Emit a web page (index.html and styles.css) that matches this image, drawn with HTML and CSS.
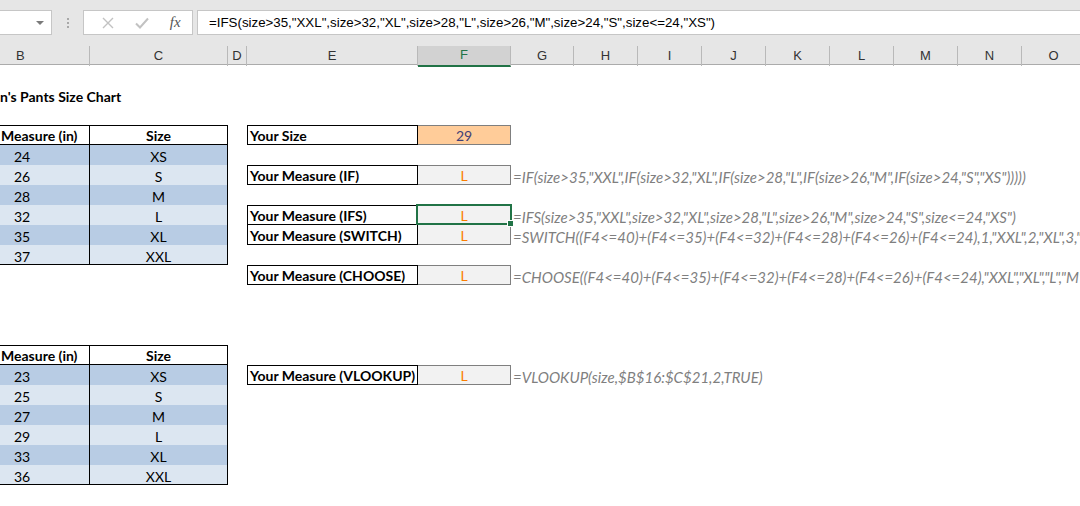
FILE: index.html
```html
<!DOCTYPE html>
<html>
<head>
<meta charset="utf-8">
<link rel="stylesheet" href="styles.css">
</head>
<body>
<div class="app">
  <div class="toolbar">
    <div class="namebox"><span class="caret"></span></div>
    <div class="grip"><i></i><i></i><i></i></div>
    <div class="fbuttons">
      <span class="btn"><svg width="12" height="12" viewBox="0 0 12 12"><path d="M1 1L11 11M11 1L1 11" stroke="#c2c2c2" stroke-width="1.4" fill="none"/></svg></span>
      <span class="btn"><svg width="14" height="12" viewBox="0 0 14 12"><path d="M1 6.5L5 10.5L13 1.5" stroke="#c2c2c2" stroke-width="2" fill="none"/></svg></span>
      <span class="btn fx">fx</span>
    </div>
    <div class="formula">=IFS(size&gt;35,"XXL",size&gt;32,"XL",size&gt;28,"L",size&gt;26,"M",size&gt;24,"S",size&lt;=24,"XS")</div>
  </div>

  <div class="colheads">
    <div class="ch chb">B</div>
    <div class="ch">C</div>
    <div class="ch">D</div>
    <div class="ch">E</div>
    <div class="ch sel">F</div>
    <div class="ch">G</div>
    <div class="ch">H</div>
    <div class="ch">I</div>
    <div class="ch">J</div>
    <div class="ch">K</div>
    <div class="ch">L</div>
    <div class="ch">M</div>
    <div class="ch">N</div>
    <div class="ch">O</div>
  </div>

  <div class="sheet">
    <div class="row"></div>
    <div class="row"><div class="title">n's Pants Size Chart</div></div>
    <div class="row"></div>
    <div class="row">
      <div class="tb th thb">Measure (in)</div><div class="tc th">Size</div><div></div>
      <div class="lbl">Your Size</div><div class="inp">29</div><div></div>
    </div>
    <div class="row">
      <div class="tb dk">24</div><div class="tc dk">XS</div><div></div><div></div><div></div><div></div>
    </div>
    <div class="row">
      <div class="tb lt">26</div><div class="tc lt">S</div><div></div>
      <div class="lbl">Your Measure (IF)</div><div class="calc">L</div>
      <div class="expl">=IF(size&gt;35,"XXL",IF(size&gt;32,"XL",IF(size&gt;28,"L",IF(size&gt;26,"M",IF(size&gt;24,"S","XS")))))</div>
    </div>
    <div class="row">
      <div class="tb dk">28</div><div class="tc dk">M</div><div></div><div></div><div></div><div></div>
    </div>
    <div class="row">
      <div class="tb lt">32</div><div class="tc lt">L</div><div></div>
      <div class="lbl">Your Measure (IFS)</div><div class="calc active">L</div>
      <div class="expl">=IFS(size&gt;35,"XXL",size&gt;32,"XL",size&gt;28,"L",size&gt;26,"M",size&gt;24,"S",size&lt;=24,"XS")</div>
    </div>
    <div class="row">
      <div class="tb dk">35</div><div class="tc dk">XL</div><div></div>
      <div class="lbl nt">Your Measure (SWITCH)</div><div class="calc nt">L</div>
      <div class="expl">=SWITCH((F4&lt;=40)+(F4&lt;=35)+(F4&lt;=32)+(F4&lt;=28)+(F4&lt;=26)+(F4&lt;=24),1,"XXL",2,"XL",3,"L",4,"M",5,"S",6,"XS")</div>
    </div>
    <div class="row">
      <div class="tb lt last">37</div><div class="tc lt last">XXL</div><div></div><div></div><div></div><div></div>
    </div>
    <div class="row">
      <div></div><div></div><div></div>
      <div class="lbl">Your Measure (CHOOSE)</div><div class="calc">L</div>
      <div class="expl">=CHOOSE((F4&lt;=40)+(F4&lt;=35)+(F4&lt;=32)+(F4&lt;=28)+(F4&lt;=26)+(F4&lt;=24),"XXL","XL","L","M","S","XS")</div>
    </div>
    <div class="row"></div>
    <div class="row"></div>
    <div class="row"></div>
    <div class="row">
      <div class="tb th thb">Measure (in)</div><div class="tc th">Size</div><div></div><div></div><div></div><div></div>
    </div>
    <div class="row">
      <div class="tb dk">23</div><div class="tc dk">XS</div><div></div>
      <div class="lbl">Your Measure (VLOOKUP)</div><div class="calc">L</div>
      <div class="expl">=VLOOKUP(size,$B$16:$C$21,2,TRUE)</div>
    </div>
    <div class="row"><div class="tb lt">25</div><div class="tc lt">S</div></div>
    <div class="row"><div class="tb dk">27</div><div class="tc dk">M</div></div>
    <div class="row"><div class="tb lt">29</div><div class="tc lt">L</div></div>
    <div class="row"><div class="tb dk">33</div><div class="tc dk">XL</div></div>
    <div class="row"><div class="tb lt last">36</div><div class="tc lt last">XXL</div></div>
    <div class="row"></div>
  </div>
</div>
</body>
</html>
```

FILE: styles.css
```css
html, body {
  margin: 0;
  padding: 0;
  background: #ffffff;
}
body {
  width: 1080px;
  height: 506px;
  overflow: hidden;
  font-family: "Lato", "Liberation Sans", sans-serif;
}
.app {
  width: 1080px;
  height: 506px;
  overflow: hidden;
}

/* ---------- formula bar ---------- */
.toolbar {
  height: 45px;
  background: #e6e6e6;
  display: flex;
  align-items: flex-start;
  padding-top: 10px;
  box-sizing: border-box;
}
.namebox {
  width: 52px;
  height: 25px;
  box-sizing: border-box;
  background: #ffffff;
  border: 1px solid #c6c6c6;
  border-left: none;
  display: flex;
  justify-content: flex-end;
  align-items: center;
  padding-right: 7px;
}
.caret {
  width: 0;
  height: 0;
  border-left: 4px solid transparent;
  border-right: 4px solid transparent;
  border-top: 4px solid #7a7a7a;
}
.grip {
  width: 31px;
  height: 25px;
  display: flex;
  flex-direction: column;
  align-items: center;
  justify-content: center;
  gap: 2px;
}
.grip i {
  display: block;
  width: 2px;
  height: 2px;
  background: #a8a8a8;
}
.fbuttons {
  width: 110px;
  height: 25px;
  box-sizing: border-box;
  background: #ffffff;
  border: 1px solid #c6c6c6;
  display: flex;
  align-items: center;
  padding: 0 0 0 7px;
}
.btn {
  width: 35px;
  display: flex;
  justify-content: center;
  align-items: center;
}
.fx {
  font-family: "Liberation Serif", serif;
  font-style: italic;
  font-size: 15px;
  color: #555555;
}
.formula {
  flex: 1;
  margin-left: 4px;
  height: 25px;
  box-sizing: border-box;
  background: #ffffff;
  border: 1px solid #c6c6c6;
  border-right: none;
  font-family: "Liberation Sans", sans-serif;
  font-size: 13.3px;
  line-height: 24px;
  padding-left: 11px;
  color: #000000;
  white-space: nowrap;
  overflow: hidden;
}

/* ---------- column headers ---------- */
.colheads {
  height: 20px;
  background: #e6e6e6;
  display: grid;
  grid-template-columns: 90px 138px 19px 171px 93px 63px repeat(8, 64px);
  border-bottom: 1px solid #ababab;
  box-sizing: border-box;
}
.ch {
  font-family: "Liberation Sans", sans-serif;
  font-size: 13px;
  color: #333333;
  text-align: center;
  line-height: 20px;
  border-right: 1px solid #b9b9b9;
  margin-top: 1px;
  box-sizing: border-box;
}
.chb {
  text-align: left;
  padding-left: 16px;
}
.ch.sel {
  background: #d2d2d2;
  color: #217346;
  border-bottom: 2px solid #217346;
  margin-bottom: -1px;
  line-height: 18px;
}

/* ---------- sheet ---------- */
.sheet {
  font-size: 14px;
  color: #000000;
}
.row {
  height: 20px;
  display: grid;
  grid-template-columns: 90px 138px 19px 171px 93px 1fr;
  grid-template-rows: 20px;
  line-height: 20px;
}
.row > div {
  box-sizing: border-box;
  white-space: nowrap;
  padding-top: 2px;
}
.title {
  grid-column: 1 / 4;
  font-weight: bold;
}

.tb {
  padding-left: 14px;
  border-right: 1px solid #000000;
}
.tc {
  text-align: center;
  border-right: 1px solid #000000;
}
.row > .th {
  background: #ffffff;
  font-weight: bold;
  border-top: 1px solid #000000;
  border-bottom: 1px solid #000000;
  line-height: 18px;
  padding-top: 1px;
}
.thb {
  padding-left: 1px;
}
.dk { background: #b8cce4; }
.lt { background: #dce6f1; }
.last { border-bottom: 1px solid #000000; }

.row > .lbl {
  border: 1px solid #000000;
  font-weight: bold;
  padding-left: 2px;
  line-height: 18px;
  padding-top: 1px;
}
.row > .inp {
  background: #ffcc99;
  color: #3f3f76;
  border: 1px solid #7f7f7f;
  border-left: none;
  text-align: center;
  line-height: 18px;
  padding-top: 1px;
}
.row > .calc {
  background: #f2f2f2;
  color: #fa7d00;
  border: 1px solid #7f7f7f;
  border-left: none;
  text-align: center;
  line-height: 18px;
  padding-top: 1px;
}
.row > .nt {
  border-top: none;
  line-height: 19px;
}
.expl {
  color: #7f7f7f;
  font-style: italic;
  font-size: 15px;
  padding-left: 2px;
  overflow: visible;
}
.active {
  position: relative;
}
.active::after {
  content: "";
  position: absolute;
  left: -2px;
  top: -2px;
  right: -2px;
  bottom: -1px;
  border: 2px solid #217346;
}
.active::before {
  content: "";
  position: absolute;
  right: -4px;
  bottom: -3px;
  width: 5px;
  height: 5px;
  background: #217346;
  border: 1px solid #ffffff;
  z-index: 2;
}
```
